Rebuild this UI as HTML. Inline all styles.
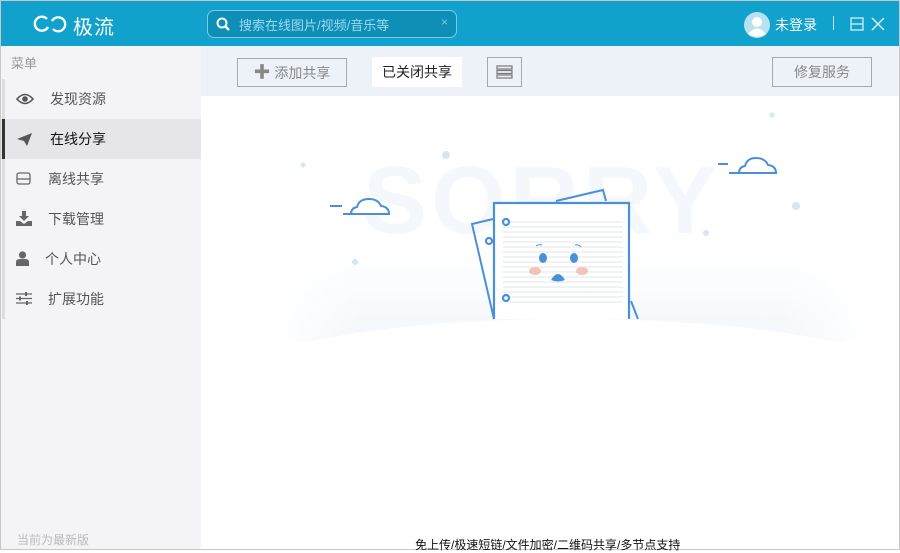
<!DOCTYPE html>
<html><head><meta charset="utf-8"><style>
*{margin:0;padding:0;box-sizing:border-box}
body{width:900px;height:550px;overflow:hidden;font-family:"Liberation Sans","Noto Sans CJK SC",sans-serif;background:#fff;position:relative;border:1px solid #c8c8c8}
.hdr{position:absolute;left:0;top:0;width:898px;height:45px;background:#10a1cc}
.abs{position:absolute}
.side{position:absolute;left:0;top:45px;width:200px;height:503px;background:#f4f4f6}
.item{position:absolute;left:0;width:200px;height:40px;font-size:14px;color:#555;line-height:40px}
.tb{position:absolute;left:200px;top:45px;width:698px;height:50px;background:#edf1f8}
.btn{position:absolute;border:1px solid #a8a8a8;height:29px;font-size:14px;color:#888;line-height:27px;text-align:center}
</style></head><body>
<svg class="abs" style="left:0;top:0" width="898" height="548">
 <defs>
  <linearGradient id="g" x1="0" y1="0" x2="0" y2="1"><stop offset="0" stop-color="#fff"/><stop offset="1" stop-color="#f3f7fb"/></linearGradient>
  <linearGradient id="h" x1="0" y1="0" x2="1" y2="0"><stop offset="0" stop-color="#fff" stop-opacity="1"/><stop offset="0.15" stop-color="#fff" stop-opacity="0"/><stop offset="0.85" stop-color="#fff" stop-opacity="0"/><stop offset="1" stop-color="#fff" stop-opacity="1"/></linearGradient>
 </defs>
 <rect x="270" y="250" width="600" height="90" fill="url(#g)"/>
 <rect x="270" y="250" width="600" height="90" fill="url(#h)"/>
 <ellipse cx="570" cy="372" rx="320" ry="54" fill="#fff"/>
 <text x="362" y="232" font-family="Liberation Sans" font-weight="bold" font-size="96" fill="#f4f8fc" letter-spacing="4">SORRY</text>
 <g fill="#d5e7f5"><circle cx="445" cy="154" r="4"/><circle cx="302" cy="164" r="2.5"/><circle cx="354" cy="261" r="3"/><circle cx="705" cy="232" r="3"/><circle cx="795" cy="205" r="4"/><circle cx="771" cy="114" r="2.5"/></g>
 <g stroke="#4a90d9" stroke-width="2" fill="none">
  <path d="M329 205H341M342 213H388 Q388 206 380 205 Q377 198 368 198 Q358 198 356 206 Q350 207 350 213"/>
  <path d="M717 163H727M728 172H775 Q775 165 767 164 Q764 157 755 157 Q746 157 744 165 Q738 166 738 172"/>
  <path d="M493 318L471 223L492 218M630 300L637 318"/>
  <path d="M555 200L602 189L605 200"/>
 </g>
 <rect x="492" y="201" width="136" height="117" fill="#fff"/>
 <g stroke="#ebeff4" stroke-width="1.6">
  <path d="M502 221H622M502 226H622M502 231H622M502 236H622M502 241H622M502 246H622M502 251H622M502 256H622M502 261H622M502 266H622M502 271H622M502 276H622M502 281H622M502 286H622M502 291H622M502 296H622M502 301H622"/>
 </g>
 <g stroke="#4a90d9" stroke-width="2.2" fill="none">
  <path d="M493 318V202H628V318"/>
  <circle cx="505" cy="221" r="3"/><circle cx="488" cy="240" r="3"/><circle cx="505" cy="297" r="3"/>
 </g>
 <g fill="#4a90d9"><ellipse cx="542" cy="257" rx="4" ry="5"/><ellipse cx="573" cy="257" rx="4" ry="5"/><path d="M550 279Q557 267 564 279Q557 282 550 279Z"/></g>
 <g fill="#f5c2b9"><ellipse cx="534" cy="270" rx="6" ry="4"/><ellipse cx="581" cy="270" rx="6" ry="4"/></g>
 <path d="M535 245Q538 243 541 244M574 244Q577 243 580 246" stroke="#4a90d9" stroke-width="1" fill="none"/>
</svg>
<div class="hdr">
 <svg class="abs" style="left:31px;top:13px" width="38" height="20"><path d="M15 5 A7 7 0 1 0 16 13" fill="none" stroke="#fff" stroke-width="2.4"/><path d="M21 15 A7 7 0 1 0 20 7" fill="none" stroke="#fff" stroke-width="2.4"/></svg>
 <div class="abs" style="left:72px;top:10px;color:#fff;font-size:20px;letter-spacing:1px">极流</div>
 <div class="abs" style="left:206px;top:9px;width:250px;height:28px;border:1px solid #7ccbe3;border-radius:7px;background:#0e8fb8"></div>
 <svg class="abs" style="left:215px;top:16px" width="14" height="14"><circle cx="6" cy="6" r="4.5" fill="none" stroke="#fff" stroke-width="2"/><path d="M9 9 L13 13" stroke="#fff" stroke-width="2.4"/></svg>
 <div class="abs" style="left:238px;top:14px;color:#9fd9ec;font-size:13px">搜索在线图片/视频/音乐等</div>
 <div class="abs" style="left:440px;top:14px;color:#7fc6de;font-size:12px">×</div>
 <svg class="abs" style="left:742px;top:10px" width="28" height="28"><circle cx="14" cy="14" r="13" fill="#b7e2ef"/><circle cx="14" cy="11" r="5" fill="#fff"/><path d="M5 23 Q14 12 23 23 Q14 28 5 23Z" fill="#fff"/></svg>
 <div class="abs" style="left:774px;top:14px;color:#fff;font-size:14px">未登录</div>
 <div class="abs" style="left:832px;top:15px;width:1px;height:14px;background:#bfe3ef"></div>
 <svg class="abs" style="left:849px;top:16px" width="36" height="14"><rect x="1" y="1" width="12" height="12" fill="none" stroke="#d8eff6" stroke-width="1.3"/><path d="M1 7H13" stroke="#d8eff6" stroke-width="1.3"/><path d="M22 1L34 13M34 1L22 13" stroke="#d8eff6" stroke-width="1.5"/></svg>
</div>
<div class="side">
 <div class="abs" style="left:10px;top:7px;font-size:13px;color:#999">菜单</div>
 <div class="abs" style="left:1px;top:33px;width:3px;height:240px;background:#ddd"></div>
 <div class="item" style="top:33px"><svg class="abs" style="left:15px;top:14px" width="18" height="12"><path d="M1 6Q9 -3 17 6Q9 15 1 6Z" fill="none" stroke="#555" stroke-width="1.6"/><circle cx="9" cy="6" r="2.8" fill="#555"/></svg><span class="abs" style="left:49px">发现资源</span></div>
 <div class="item" style="top:73px;background:#e6e6ea;color:#111"><div class="abs" style="left:1px;top:0;width:3px;height:40px;background:#333"></div><svg class="abs" style="left:15px;top:13px" width="17" height="15"><path d="M1 7L16 1L11 14L8 9Z" fill="#555"/></svg><span class="abs" style="left:49px">在线分享</span></div>
 <div class="item" style="top:113px"><svg class="abs" style="left:15px;top:13px" width="16" height="13"><rect x="1" y="1" width="13" height="11" rx="2" fill="none" stroke="#666" stroke-width="1.3"/><path d="M1 7H14" stroke="#666" stroke-width="1.3"/></svg><span class="abs" style="left:47px">离线共享</span></div>
 <div class="item" style="top:153px"><svg class="abs" style="left:15px;top:12px" width="16" height="15"><path d="M6 0H10V5H13L8 10L3 5H6Z M0 10H4L8 13L12 10H16V15H0Z" fill="#666"/></svg><span class="abs" style="left:47px">下载管理</span></div>
 <div class="item" style="top:193px"><svg class="abs" style="left:15px;top:12px" width="13" height="15"><circle cx="6.5" cy="4" r="3.6" fill="#666"/><path d="M0 15V11Q0 8 4 8H9Q13 8 13 11V15Z" fill="#666"/></svg><span class="abs" style="left:44px">个人中心</span></div>
 <div class="item" style="top:233px"><svg class="abs" style="left:15px;top:13px" width="16" height="13"><path d="M0 2H16M0 6.5H16M0 11H16" stroke="#666" stroke-width="1.2"/><path d="M10 0V4M4 4.5V8.5M11 9V13" stroke="#666" stroke-width="2"/></svg><span class="abs" style="left:47px">扩展功能</span></div>
 <div class="abs" style="left:16px;top:485px;font-size:12px;color:#bbb">当前为最新版</div>
</div>
<div class="tb">
 <div class="btn" style="left:36px;top:12px;width:110px"><b style="color:#888;font-size:17px">✚</b> 添加共享</div>
 <div class="abs" style="left:171px;top:11px;width:90px;height:30px;background:#fff;border-radius:2px;font-size:14px;color:#222;line-height:30px;text-align:center">已关闭共享</div>
 <div class="btn" style="left:286px;top:11px;width:35px;height:30px"><svg style="margin-top:7px" width="17" height="14"><rect x="1" y="1" width="15" height="3" fill="none" stroke="#777" stroke-width="1.2"/><rect x="1" y="5.5" width="15" height="3" fill="none" stroke="#777" stroke-width="1.2"/><rect x="1" y="10" width="15" height="3" fill="none" stroke="#777" stroke-width="1.2"/></svg></div>
 <div class="btn" style="left:571px;top:11px;width:100px;height:30px;line-height:28px">修复服务</div>
</div>
<div class="abs" style="left:414px;top:535px;font-size:12px;color:#111">免上传/极速短链/文件加密/二维码共享/多节点支持</div>
</body></html>
